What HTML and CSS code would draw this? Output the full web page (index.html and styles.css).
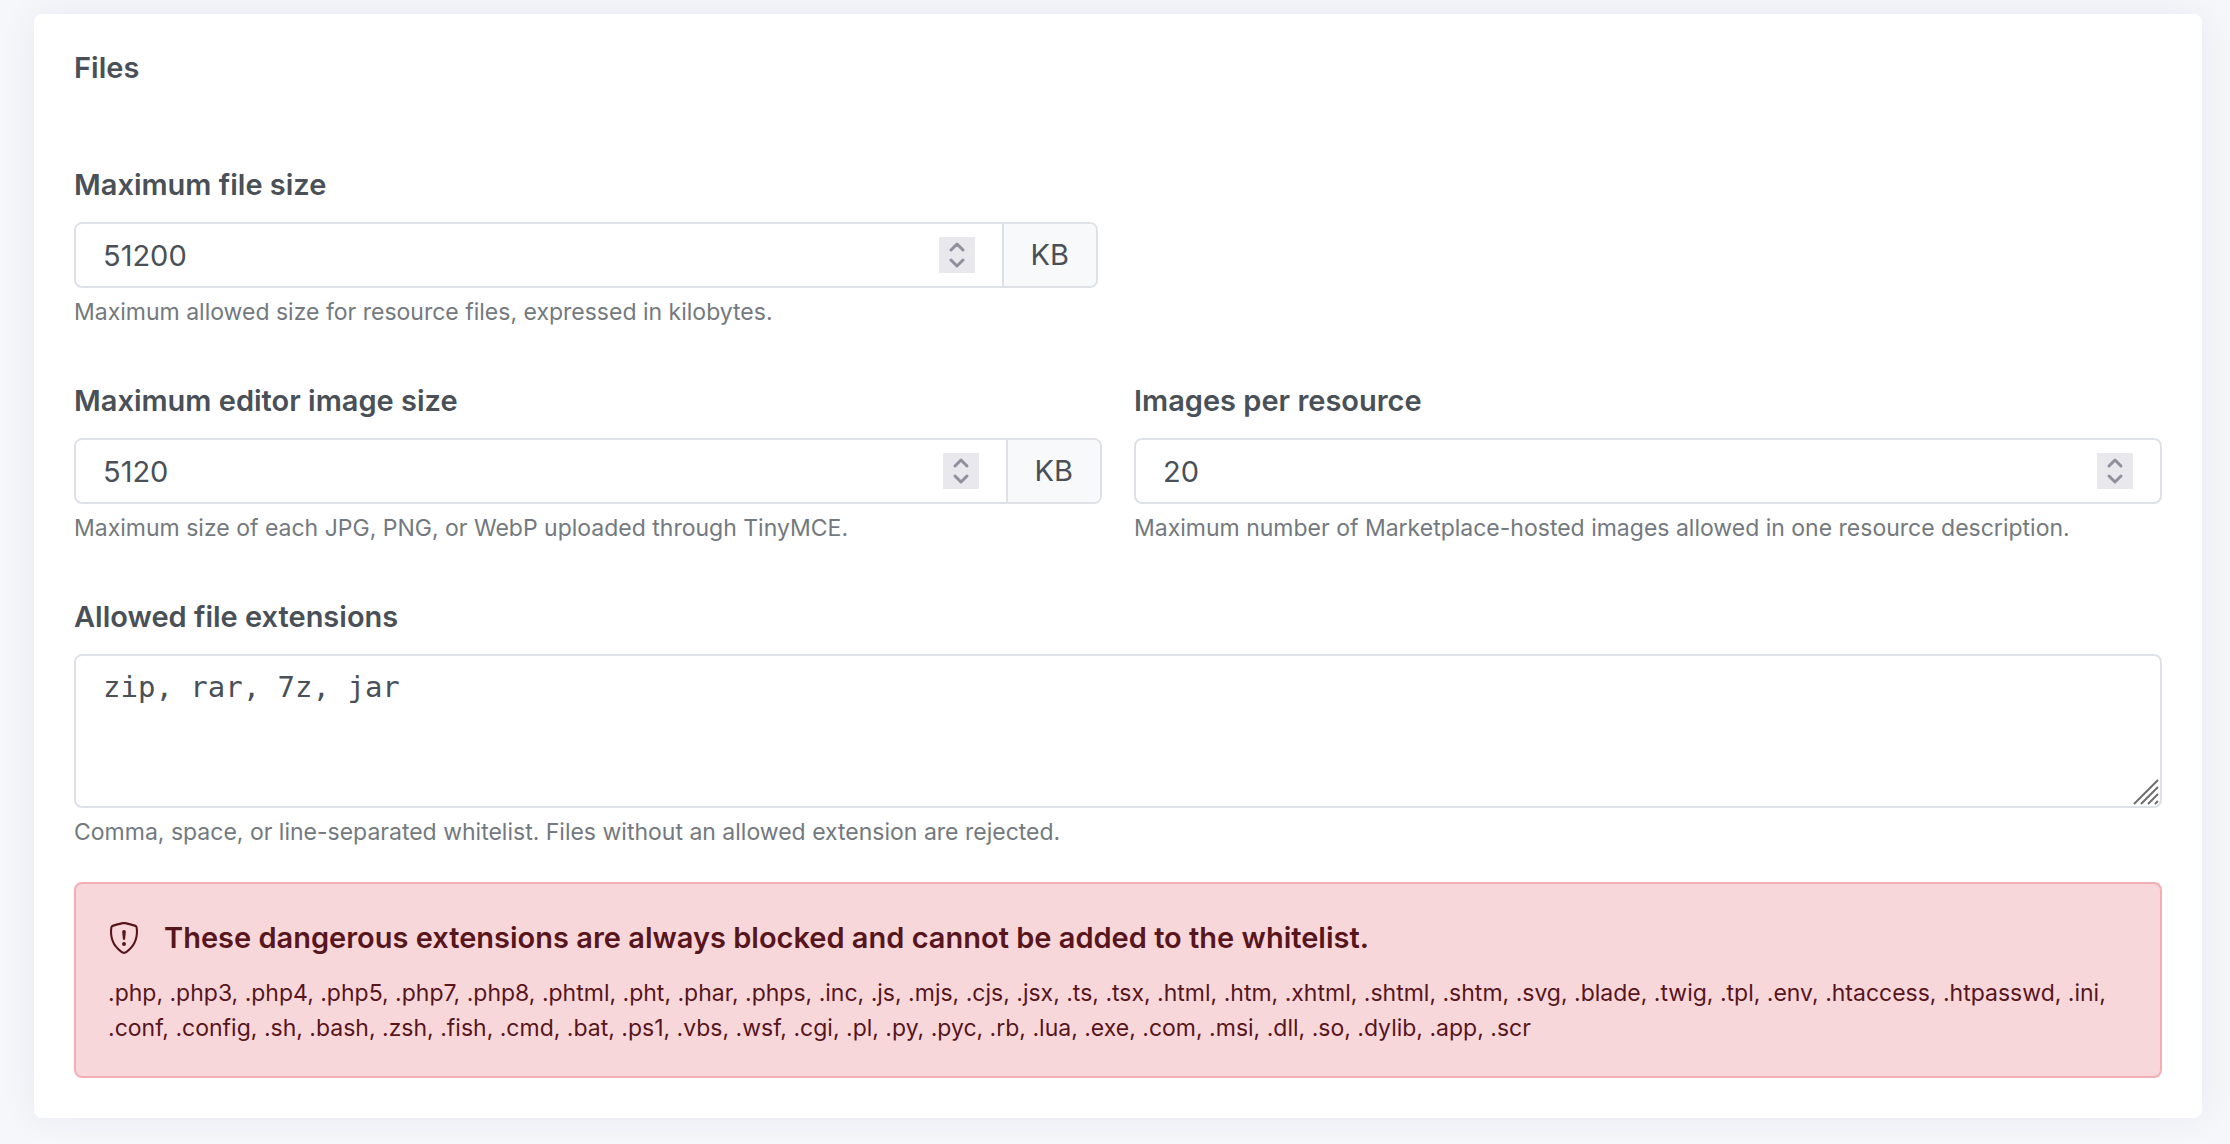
FILE: index.html
```html
<!DOCTYPE html>
<html lang="en">
<head>
  <meta charset="UTF-8" />
  <meta name="viewport" content="width=device-width, initial-scale=1.0"/>
  <title>Files</title>
  <link rel="stylesheet" href="styles.css">
</head>
<body>
  <svg class="sprite" aria-hidden="true">
    <symbol id="stepper" viewBox="0 0 36 36">
      <path d="M12 13l6-6 6 6M12 23l6 6 6-6" fill="none" stroke="#8f8f9d" stroke-width="3" stroke-linecap="round" stroke-linejoin="round"/>
    </symbol>
  </svg>

  <main class="card">
    <h2>Files</h2>

    <form>
      <div class="row row-half">
        <div class="field">
          <label for="maxFileSize">Maximum file size</label>
          <div class="control">
            <input type="number" id="maxFileSize" value="51200" aria-describedby="maxFileSizeHelp" />
            <svg class="stepper" aria-hidden="true"><use href="#stepper"/></svg>
            <span class="unit">KB</span>
          </div>
          <p class="help" id="maxFileSizeHelp">Maximum allowed size for resource files, expressed in kilobytes.</p>
        </div>
      </div>

      <div class="row">
        <div class="field">
          <label for="maxImageSize">Maximum editor image size</label>
          <div class="control">
            <input type="number" id="maxImageSize" value="5120" aria-describedby="maxImageSizeHelp" />
            <svg class="stepper" aria-hidden="true"><use href="#stepper"/></svg>
            <span class="unit">KB</span>
          </div>
          <p class="help" id="maxImageSizeHelp">Maximum size of each JPG, PNG, or WebP uploaded through TinyMCE.</p>
        </div>
        <div class="field">
          <label for="imagesPerResource">Images per resource</label>
          <div class="control">
            <input type="number" id="imagesPerResource" value="20" aria-describedby="imagesPerResourceHelp" />
            <svg class="stepper" aria-hidden="true"><use href="#stepper"/></svg>
          </div>
          <p class="help" id="imagesPerResourceHelp">Maximum number of Marketplace-hosted images allowed in one resource description.</p>
        </div>
      </div>

      <div class="field">
        <label for="extensions">Allowed file extensions</label>
        <div class="textarea-wrap">
          <textarea id="extensions" rows="3" spellcheck="false" aria-describedby="extensionsHelp">zip, rar, 7z, jar</textarea>
          <svg class="grip" viewBox="0 0 26 26" aria-hidden="true">
            <path d="M1 25L25 1M8 25L25 8M15 25L25 15M22 25l3-3" fill="none" stroke="#6e6e6e" stroke-width="2"/>
          </svg>
        </div>
        <p class="help" id="extensionsHelp">Comma, space, or line-separated whitelist. Files without an allowed extension are rejected.</p>
      </div>
    </form>

    <div class="alert" role="alert">
      <div class="alert-title">
        <svg class="shield" viewBox="0 0 16 16" fill="currentColor" aria-hidden="true">
          <path d="M5.338 1.59a61 61 0 0 0-2.837.856.48.48 0 0 0-.328.39c-.554 4.157.726 7.19 2.253 9.188a10.7 10.7 0 0 0 2.287 2.233c.346.244.652.42.893.533q.18.085.293.118a1 1 0 0 0 .101.025 1 1 0 0 0 .1-.025q.114-.034.294-.118c.24-.113.547-.29.893-.533a10.7 10.7 0 0 0 2.287-2.233c1.527-1.997 2.807-5.031 2.253-9.188a.48.48 0 0 0-.328-.39c-.651-.213-1.75-.56-2.837-.855C9.552 1.29 8.531 1.067 8 1.067c-.53 0-1.552.223-2.662.524zM5.072.56C6.157.265 7.31 0 8 0s1.843.265 2.928.56c1.11.3 2.229.655 2.887.87a1.54 1.54 0 0 1 1.044 1.262c.596 4.477-.787 7.795-2.465 9.99a11.8 11.8 0 0 1-2.517 2.453 7 7 0 0 1-1.048.625c-.28.132-.581.24-.829.24s-.548-.108-.829-.24a7 7 0 0 1-1.048-.625 11.8 11.8 0 0 1-2.517-2.453C1.928 10.487.545 7.169 1.141 2.692A1.54 1.54 0 0 1 2.185 1.43 63 63 0 0 1 5.072.56"/>
          <path d="M7.001 11a1 1 0 1 1 2 0 1 1 0 0 1-2 0M7.1 4.995a.905.905 0 1 1 1.8 0l-.35 3.507a.553.553 0 0 1-1.1 0z"/>
        </svg>
        <strong>These dangerous extensions are always blocked and cannot be added to the whitelist.</strong>
      </div>
      <p>.php, .php3, .php4, .php5, .php7, .php8, .phtml, .pht, .phar, .phps, .inc, .js, .mjs, .cjs, .jsx, .ts, .tsx, .html, .htm, .xhtml, .shtml, .shtm, .svg, .blade, .twig, .tpl, .env, .htaccess, .htpasswd, .ini, .conf, .config, .sh, .bash, .zsh, .fish, .cmd, .bat, .ps1, .vbs, .wsf, .cgi, .pl, .py, .pyc, .rb, .lua, .exe, .com, .msi, .dll, .so, .dylib, .app, .scr</p>
    </div>
  </main>
</body>
</html>
```
FILE: styles.css
```css
* {
  box-sizing: border-box;
  margin: 0;
  padding: 0;
}

body {
  font-family: Inter, sans-serif;
  font-size: 29px;
  line-height: 44px;
  color: #495057;
  background: #f5f7fb;
  padding: 14px 28px 24px 34px;
}

.sprite {
  display: none;
}

.card {
  background: #fff;
  border-radius: 8px;
  padding: 32px 40px 40px;
  box-shadow: 0 0 40px rgba(33, 37, 60, 0.06);
}

h2 {
  font-size: 29px;
  font-weight: 600;
  margin-bottom: 73px;
}

.row {
  display: grid;
  grid-template-columns: 1fr 1fr;
  gap: 32px;
  margin-bottom: 49px;
}

.row-half {
  gap: 40px;
}

label {
  display: block;
  font-weight: 600;
  margin-bottom: 15px;
}

.control {
  display: flex;
  align-items: center;
  border: 2px solid #dee2e6;
  border-radius: 8px;
  overflow: hidden;
}

input,
textarea {
  color: inherit;
  background: transparent;
  font-size: 29px;
  line-height: 44px;
  padding: 9px 27px;
  border: none;
  outline: none;
}

input {
  flex: 1;
  min-width: 0;
  height: 62px;
  font-family: inherit;
  appearance: textfield;
}

.stepper {
  width: 36px;
  height: 36px;
  margin-right: 27px;
  background: #e9e9ed;
}

.unit {
  padding: 9px 27px;
  background: #f8f9fb;
  border-left: 2px solid #dee2e6;
}

.textarea-wrap {
  position: relative;
}

textarea {
  display: block;
  width: 100%;
  font-family: "DejaVu Sans Mono", monospace;
  border: 2px solid #dee2e6;
  border-radius: 8px;
  resize: none;
}

.grip {
  position: absolute;
  right: 3px;
  bottom: 3px;
  width: 26px;
  height: 26px;
}

.help {
  color: #73797e;
  font-size: 23px;
  line-height: 35px;
  margin-top: 7px;
}

.alert {
  color: #58151c;
  background: #f7d7da;
  border: 2px solid #f1aeb5;
  border-radius: 8px;
  margin-top: 32px;
  padding: 32px 32px 30px;
}

.alert-title {
  display: flex;
  align-items: center;
  gap: 24px;
  margin-bottom: 16px;
}

.alert strong {
  font-weight: 600;
}

.shield {
  width: 32px;
  height: 32px;
}

.alert p {
  font-size: 23px;
  line-height: 35px;
}

@media (max-width: 900px) {
  .row {
    grid-template-columns: 1fr;
  }
}
```
